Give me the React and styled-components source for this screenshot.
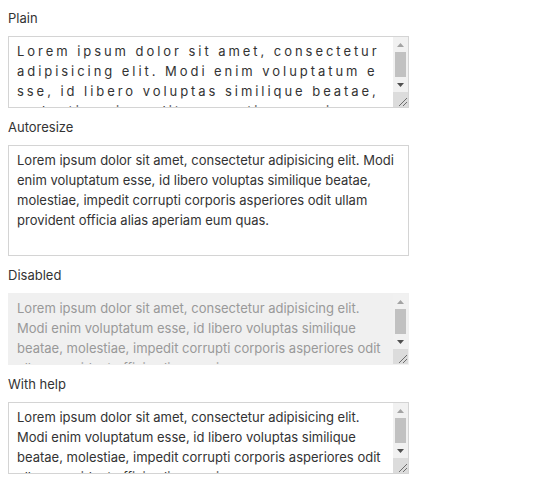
import React from "react";
import styled, { createGlobalStyle } from "styled-components";

const Global = createGlobalStyle`
  body {
    margin: 8px;
    background: #ffffff;
    font-family: Inter, "Noto Sans", sans-serif;
    color: #333333;
  }
`;

const Form = styled.div`
  display: flex;
  flex-direction: column;
  gap: 9px;
  width: 401px;
`;

const Field = styled.div`
  display: flex;
  flex-direction: column;
  gap: 8px;
`;

const Label = styled.label`
  font-size: 13px;
  line-height: 20px;
  color: #333333;
`;

const Box = styled.div`
  box-sizing: border-box;
  display: flex;
  width: 100%;
  height: ${(p) => p.$height}px;
  border: 1px solid ${(p) => (p.$disabled ? "#f0f0f0" : "#d4d4d4")};
  background: ${(p) => (p.$disabled ? "#f0f0f0" : "#ffffff")};
  overflow: hidden;
`;

const Input = styled.textarea`
  box-sizing: border-box;
  flex: 1;
  min-width: 0;
  height: 100%;
  margin: 0;
  padding: 4px 8px;
  border: 0;
  background: transparent;
  color: ${(p) => (p.disabled ? "#999999" : "#333333")};
  font-family: Inter, "Noto Sans", sans-serif;
  font-size: 13px;
  line-height: 20px;
  letter-spacing: ${(p) => p.$spacing || "normal"};
  word-break: ${(p) => (p.$spacing ? "break-all" : "normal")};
  overflow: hidden;
  resize: none;
  outline: none;
  scrollbar-width: none;
`;

const ScrollBar = styled.div`
  flex: none;
  width: 15px;
  display: flex;
  flex-direction: column;
  background: #f1f1f1;
`;

const ArrowButton = styled.div`
  flex: none;
  height: 15px;
  display: flex;
  align-items: center;
  justify-content: center;
`;

const Track = styled.div`
  flex: 1;
  padding: 0 2px;
  display: flex;
  flex-direction: column;
`;

const Thumb = styled.div`
  height: 25px;
  background: #c1c1c1;
`;

const Corner = styled.div`
  flex: none;
  height: 15px;
  background: #dcdcdc;
  display: flex;
  align-items: flex-end;
  justify-content: flex-end;
`;

const text =
  "Lorem ipsum dolor sit amet, consectetur adipisicing elit. Modi enim voluptatum esse, id libero voluptas similique beatae, molestiae, impedit corrupti corporis asperiores odit ullam provident officia alias aperiam eum quas.";

function FakeScrollBar() {
  return (
    <ScrollBar>
      <ArrowButton>
        <svg width="7" height="4" viewBox="0 0 7 4">
          <polygon points="0,4 7,4 3.5,0" fill="#a3a3a3" />
        </svg>
      </ArrowButton>
      <Track>
        <Thumb />
      </Track>
      <ArrowButton>
        <svg width="7" height="4" viewBox="0 0 7 4">
          <polygon points="0,0 7,0 3.5,4" fill="#505050" />
        </svg>
      </ArrowButton>
      <Corner>
        <svg width="15" height="15" viewBox="0 0 15 15">
          <line x1="6" y1="14" x2="14" y2="6" stroke="#6e6e6e" strokeWidth="1" />
          <line x1="10" y1="14" x2="14" y2="10" stroke="#6e6e6e" strokeWidth="1" />
        </svg>
      </Corner>
    </ScrollBar>
  );
}

function TextField({ label, height, disabled, spacing, auto }) {
  return (
    <Field>
      <Label>{label}</Label>
      <Box $height={height} $disabled={disabled}>
        <Input disabled={disabled} $spacing={spacing} defaultValue={text} />
        {!auto && <FakeScrollBar />}
      </Box>
    </Field>
  );
}

export default function App() {
  return (
    <>
      <Global />
      <Form>
        <TextField label="Plain" height={72} spacing="2.95px" />
        <TextField label="Autoresize" height={111} auto />
        <TextField label="Disabled" height={72} disabled />
        <TextField label="With help" height={72} />
      </Form>
    </>
  );
}
